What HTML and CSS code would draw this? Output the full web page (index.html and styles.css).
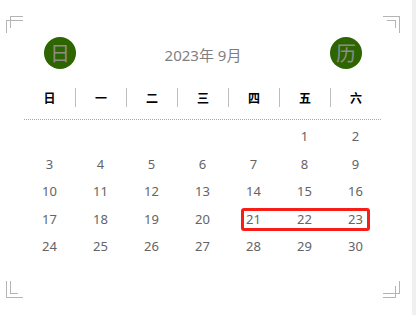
FILE: index.html
```html
<!DOCTYPE html>
<html lang="zh-CN">
<head>
<meta charset="utf-8">
<link rel="stylesheet" href="styles.css">
</head>
<body>
<div class="page">
  <svg class="marks" width="412" height="315" viewBox="0 0 412 315">
    <g stroke="#b4b4b4" stroke-width="1" fill="none" shape-rendering="crispEdges">
      <path d="M10.5 28 V16.5 H23"/>
      <path d="M6.5 33 V20.5 H23"/>
      <path d="M399.5 33 V16.5 H383"/>
      <path d="M395.5 28 V20.5 H387"/>
      <path d="M6.5 281 V297.5 H23"/>
      <path d="M10.5 281 V293.5 H18"/>
      <path d="M399.5 281 V293.5 H383"/>
      <path d="M395.5 286 V297.5 H383"/>
    </g>
  </svg>
  <div class="cal">
    <div class="head">
      <span class="badge">日</span>
      <span class="title">2023年 9月</span>
      <span class="badge">历</span>
    </div>
    <div class="weekdays">
      <span>日</span><span>一</span><span>二</span><span>三</span><span>四</span><span>五</span><span>六</span>
    </div>
    <div class="days">
      <span></span><span></span><span></span><span></span><span></span><span>1</span><span>2</span>
      <span>3</span><span>4</span><span>5</span><span>6</span><span>7</span><span>8</span><span>9</span>
      <span>10</span><span>11</span><span>12</span><span>13</span><span>14</span><span>15</span><span>16</span>
      <span>17</span><span>18</span><span>19</span><span>20</span><span>21</span><span>22</span><span>23</span>
      <span>24</span><span>25</span><span>26</span><span>27</span><span>28</span><span>29</span><span>30</span>
    </div>
  </div>
  <div class="highlight"></div>
</div>
</body>
</html>
```

FILE: styles.css
```css
html, body {
  margin: 0;
  padding: 0;
  background: #f0f0f0;
}
.page {
  position: relative;
  width: 412px;
  height: 315px;
  background: #ffffff;
  font-family: "Noto Sans", "Noto Sans CJK SC", sans-serif;
  overflow: hidden;
}
.marks {
  position: absolute;
  left: 0;
  top: 0;
}
.cal {
  padding-top: 37px;
}
.head {
  display: flex;
  justify-content: space-between;
  align-items: center;
  margin-left: 44px;
  width: 318px;
  height: 32px;
}
.badge {
  width: 32px;
  height: 32px;
  border-radius: 50%;
  background: #2d6500;
  color: #8c8c8c;
  font-family: "Noto Sans CJK SC", sans-serif;
  font-size: 20px;
  line-height: 32px;
  text-align: center;
}
.title {
  color: #7f7f7f;
  font-size: 15px;
  font-family: "Noto Sans", "Noto Sans CJK SC", sans-serif;
  padding-top: 2px;
}
.weekdays {
  display: grid;
  grid-template-columns: repeat(7, 51px);
  margin: 19px 0 0 24px;
  height: 19px;
}
.weekdays span {
  font-family: "Noto Sans CJK SC", sans-serif;
  font-weight: bold;
  font-size: 12px;
  color: #000;
  text-align: center;
  line-height: 19px;
}
.weekdays span + span {
  border-left: 1px solid #bdbdbd;
}
.days {
  display: grid;
  grid-template-columns: repeat(7, 51px);
  grid-auto-rows: 27.5px;
  margin: 12px 0 0 24px;
  width: 357px;
  border-top: 1px dotted #a8a8a8;
  padding-top: 3px;
}
.days span {
  text-align: center;
  line-height: 27.5px;
  font-size: 13px;
  color: #646464;
}
.highlight {
  position: absolute;
  left: 241px;
  top: 208px;
  width: 123px;
  height: 17px;
  border: 3px solid #f71e17;
  border-radius: 3px;
}
```
